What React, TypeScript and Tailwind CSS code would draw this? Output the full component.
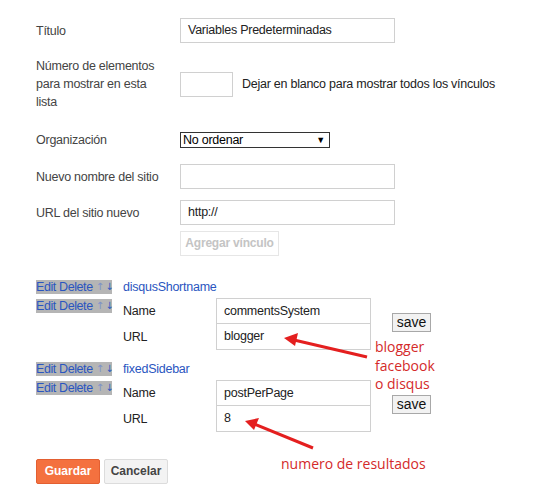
import React from "react"

const font = { fontFamily: '"Liberation Sans", Arial, sans-serif' }
const arrowFont = { fontFamily: '"DejaVu Sans", sans-serif' }

function Field({ label, children }: { label: React.ReactNode; children: React.ReactNode }) {
  return (
    <div className="flex items-center">
      <div className="w-[144px] shrink-0 text-[12.5px] tracking-[-0.25px] leading-[18px] text-[#444]">{label}</div>
      {children}
    </div>
  )
}

function TextBox({ value = "", w = "w-[215px]" }: { value?: string; w?: string }) {
  return (
    <div className={`${w} h-[25px] border border-[#d0d0d0] bg-white px-[7px] text-[12.5px] tracking-[-0.25px] leading-[23px] text-[#222]`}>
      {value}
    </div>
  )
}

function EditDelete() {
  return (
    <div className="w-[76px] h-[14px] flex items-center bg-[#b5b5b5] text-[12.5px] tracking-[-0.4px] leading-[14px] text-[#2a55c0] whitespace-nowrap">
      <span>Edit Delete</span>
      <span className="ml-[3px] text-[10px] tracking-normal text-[#7d91c9]" style={arrowFont}>↑</span>
      <span className="ml-[1px] text-[10px] tracking-normal text-[#2a55c0]" style={arrowFont}>↓</span>
    </div>
  )
}

function SaveButton() {
  return (
    <div className="w-[39px] h-[19px] border border-[#a8a8a8] bg-[#f2f2f2] text-center text-[14px] leading-[17px] text-[#111]">
      save
    </div>
  )
}

function LinkBlock({ title, name, url }: { title: string; name: string; url: string }) {
  return (
    <div className="flex flex-col">
      <div className="flex items-center">
        <EditDelete />
        <span className="ml-[11px] text-[12.5px] tracking-[-0.25px] leading-[14px] text-[#2a55c0]">{title}</span>
      </div>
      <div className="flex items-start mt-[4px]">
        <div className="mt-[1px]">
          <EditDelete />
        </div>
        <div className="ml-[11px] flex items-center">
          <div className="flex flex-col">
            <div className="flex items-center">
              <span className="w-[93px] text-[12.5px] tracking-[-0.25px] text-[#222]">Name</span>
              <div className="w-[155px] h-[26px] border border-[#d0d0d0] px-[7px] text-[12.5px] tracking-[-0.25px] leading-[24px] text-[#222]">{name}</div>
            </div>
            <div className="flex items-center">
              <span className="w-[93px] text-[12.5px] tracking-[-0.25px] text-[#222]">URL</span>
              <div className="w-[155px] h-[26px] border border-[#d0d0d0] border-t-0 px-[7px] text-[12.5px] tracking-[-0.25px] leading-[24px] text-[#222]">{url}</div>
            </div>
          </div>
          <div className="ml-[21px] -mt-[4px]">
            <SaveButton />
          </div>
        </div>
      </div>
    </div>
  )
}

export default function App() {
  return (
    <div className="relative w-[552px] h-[502px] bg-white overflow-hidden" style={font}>
      <div className="flex flex-col pl-[36px] pt-[18px]">
        <Field label="Título">
          <TextBox value="Variables Predeterminadas" />
        </Field>

        <div className="mt-[14px]">
          <Field label={<>Número de elementos<br />para mostrar en esta<br />lista</>}>
            <div className="w-[53px] h-[25px] border border-[#d0d0d0]" />
            <span className="ml-[9px] text-[12.5px] tracking-[-0.25px] text-[#222]">Dejar en blanco para mostrar todos los vínculos</span>
          </Field>
        </div>

        <div className="mt-[20px]">
          <Field label="Organización">
            <div className="w-[150px] h-[16px] border border-[#333] flex items-center justify-between pl-[2px] pr-[4px] text-[12.5px] tracking-[-0.25px] leading-[14px] text-black">
              <span>No ordenar</span>
              <span className="text-[9px]">▼</span>
            </div>
          </Field>
        </div>

        <div className="mt-[15px]">
          <Field label="Nuevo nombre del sitio">
            <TextBox />
          </Field>
        </div>

        <div className="mt-[11px]">
          <Field label="URL del sitio nuevo">
            <TextBox value="http://" />
          </Field>
        </div>

        <div className="mt-[6px] ml-[144px]">
          <div className="w-[99px] h-[25px] border border-[#e6e6e6] text-center whitespace-nowrap text-[12px] tracking-[-0.2px] leading-[23px] font-bold text-[#c4c4c4]">
            Agregar vínculo
          </div>
        </div>

        <div className="mt-[24px]">
          <LinkBlock title="disqusShortname" name="commentsSystem" url="blogger" />
        </div>
        <div className="mt-[12px]">
          <LinkBlock title="fixedSidebar" name="postPerPage" url="8" />
        </div>

        <div className="mt-[27px] flex gap-[4px]">
          <div className="w-[64px] h-[25px] rounded-[2px] border border-[#e35f31] bg-[#f4713f] text-center text-[12px] leading-[23px] font-bold text-white">
            Guardar
          </div>
          <div className="w-[64px] h-[25px] rounded-[2px] border border-[#dcdcdc] bg-[#f3f3f3] text-center text-[12px] leading-[23px] font-bold text-[#444]">
            Cancelar
          </div>
        </div>
      </div>

      {/* annotations drawn over the form */}
      <svg className="absolute left-0 top-0 pointer-events-none" width="552" height="502">
        <line x1="367" y1="357" x2="294" y2="340" stroke="#e41f1f" strokeWidth="3" />
        <polygon points="284,338 298,333 295,346" fill="#e41f1f" />
        <line x1="313" y1="448" x2="254" y2="424" stroke="#e41f1f" strokeWidth="3" />
        <polygon points="245,421 259,418 254,430" fill="#e41f1f" />
      </svg>
      <div
        className="absolute left-[375px] top-[338px] text-[14px] leading-[18.5px] text-[#d42a2a]"
        style={{ fontFamily: '"Open Sans", sans-serif' }}
      >
        blogger<br />facebook<br />o disqus
      </div>
      <div
        className="absolute left-[281px] top-[454px] text-[14px] leading-[20px] text-[#d42a2a]"
        style={{ fontFamily: '"Open Sans", sans-serif' }}
      >
        numero de resultados
      </div>
    </div>
  )
}
